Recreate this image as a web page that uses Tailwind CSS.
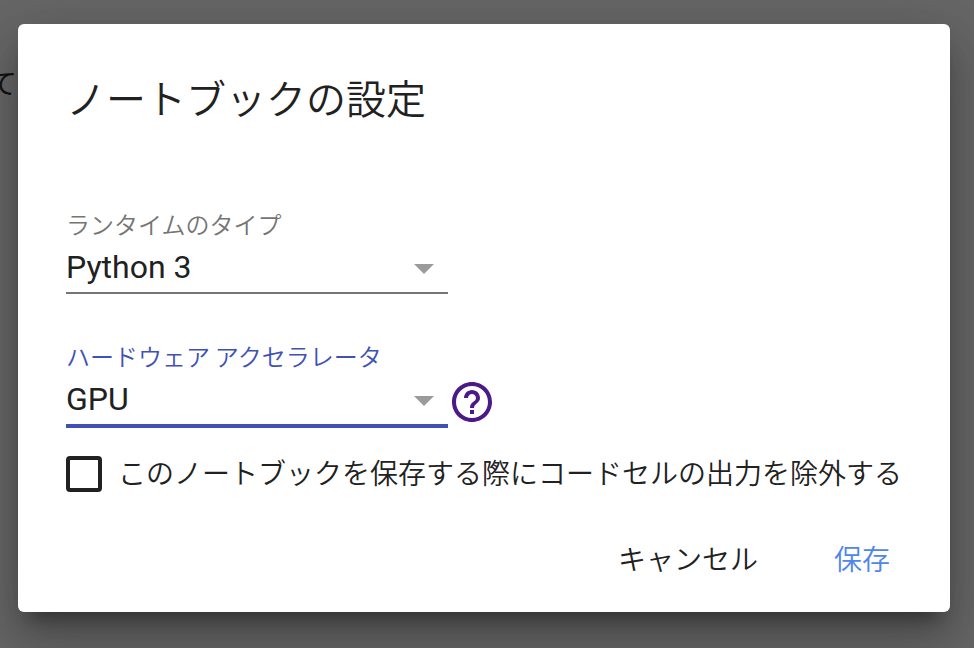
<!DOCTYPE html>
<html lang="ja">
  <head>
    <meta charset="UTF-8" />
    <meta name="viewport" content="width=device-width, initial-scale=1.0" />
    <title>ノートブックの設定</title>
    <script src="https://cdn.jsdelivr.net/npm/@tailwindcss/browser@4"></script>
  </head>
  <body class="relative h-screen overflow-hidden bg-[#666666] px-[18px] pt-6 font-['Roboto','Noto_Sans_CJK_JP',sans-serif] text-[#212121]">
    <!-- Page text behind the dialog -->
    <span class="absolute -left-[11px] top-[67px] text-[28px] leading-9 text-[#111111]">て</span>

    <!-- Dialog -->
    <div role="dialog" class="relative flex h-[588px] w-[932px] flex-col rounded-md bg-white px-12 shadow-[0_32px_48px_4px_rgba(0,0,0,0.14),0_12px_60px_10px_rgba(0,0,0,0.12),0_16px_20px_-10px_rgba(0,0,0,0.4)]">
      <h1 class="mt-[49px] h-[55px] text-[40px] leading-14 font-[350] whitespace-nowrap">ノートブックの設定</h1>

      <!-- Runtime type -->
      <div class="mt-20 h-[86px] w-[382px] border-b-2 border-[#757575]">
        <label class="block h-9 text-[24px] leading-9 font-[350] text-[#757575]">ランタイムのタイプ</label>
        <div class="flex h-12 items-center justify-between pr-[14px] text-[32px]">
          <span class="pb-0.5">Python 3</span>
          <svg class="mt-0.5 h-[10px] w-5" viewBox="0 0 20 10" fill="#9b9b9b"><path d="M0 0h20L10 10z" /></svg>
        </div>
      </div>

      <!-- Hardware accelerator -->
      <div class="mt-[46px] flex h-[88px]">
        <div class="w-[382px] border-b-4 border-[#3f51b5]">
          <label class="block h-9 text-[24px] leading-9 font-[350] text-[#3f51b5] [word-spacing:-1px]">ハードウェア アクセラレータ</label>
          <div class="flex h-12 items-center justify-between pr-[14px] text-[32px]">
            <span class="pb-0.5">GPU</span>
            <svg class="mt-0.5 h-[10px] w-5" viewBox="0 0 20 10" fill="#9b9b9b"><path d="M0 0h20L10 10z" /></svg>
          </div>
        </div>
        <svg class="mt-[38px] h-12 w-12" viewBox="0 0 24 24" fill="#4b1a88"><path d="M11 18h2v-2h-2v2zm1-16C6.48 2 2 6.48 2 12s4.48 10 10 10 10-4.48 10-10S17.52 2 12 2zm0 18c-4.41 0-8-3.59-8-8s3.59-8 8-8 8 3.59 8 8-3.59 8-8 8zm0-14c-2.21 0-4 1.79-4 4h2c0-1.1.9-2 2-2s2 .9 2 2c0 2-3 1.75-3 5h2c0-2.25 3-2.5 3-5 0-2.21-1.79-4-4-4z" /></svg>
      </div>

      <!-- Omit output checkbox -->
      <label class="mt-7 flex h-9 items-center gap-4 text-[28px] font-[350] whitespace-nowrap">
        <span class="size-9 shrink-0 rounded border-4 border-[#212121]"></span>
        <span class="pt-0.5">このノートブックを保存する際にコードセルの出力を除外する</span>
      </label>

      <!-- Actions -->
      <div class="mt-[49px] flex h-10 items-center justify-end gap-[76px] pr-3 text-[28px] font-[350]">
        <button>キャンセル</button>
        <button class="text-[#4f86ec]">保存</button>
      </div>
    </div>
  </body>
</html>
